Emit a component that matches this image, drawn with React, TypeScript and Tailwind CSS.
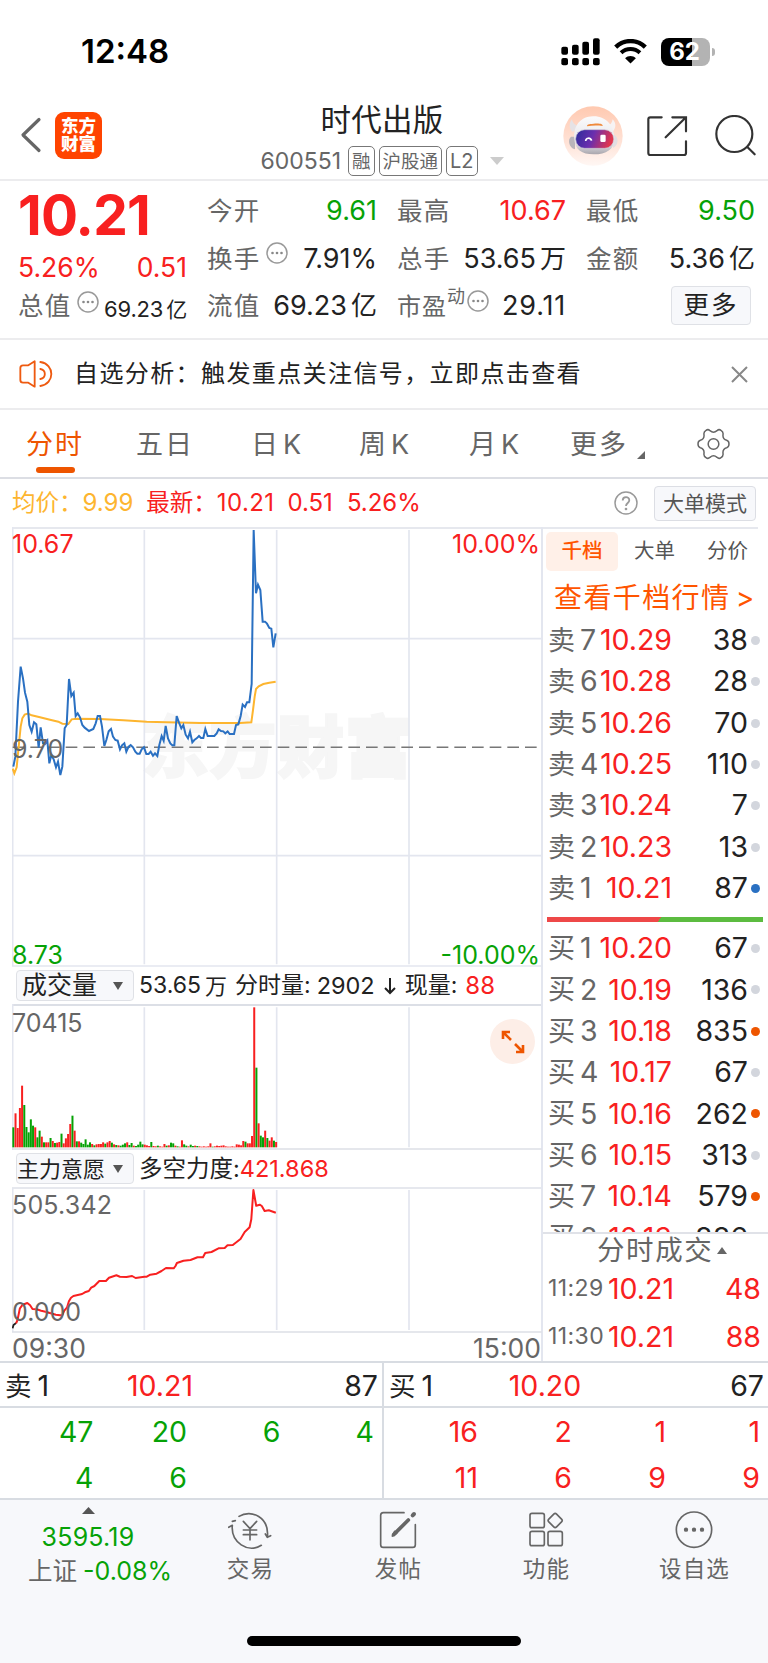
import React from "react";
import clsx from "clsx";

const sells = [
  ["7", "10.29", "38"],
  ["6", "10.28", "28"],
  ["5", "10.26", "70"],
  ["4", "10.25", "110"],
  ["3", "10.24", "7"],
  ["2", "10.23", "13"],
  ["1", "10.21", "87", "blue"],
];

const buys = [
  ["1", "10.20", "67"],
  ["2", "10.19", "136"],
  ["3", "10.18", "835", "orange"],
  ["4", "10.17", "67"],
  ["5", "10.16", "262", "orange"],
  ["6", "10.15", "313"],
  ["7", "10.14", "579", "orange"],
  ["8", "10.13", "886", "orange"],
];

// r = up, g = down
const volumes =
  "60g 102r 58r 118r 185r 127g 61g 45g 84g 65g 60r 30g 50g 32r 15g 15r 15r 28g 19r 13g 14r 16r 41g 12r 27r 40r 70r 95g 50r 18g 18r 14g 10g 24g 8g 15g 10r 6g 9r 10r 10r 15r 11g 15r 19r 14g 9r 7g 6r 5g 8g 12g 15r 7g 13g 5r 4g 8g 17g 9g 8r 6r 4r 16g 4r 3r 5g 3r 2r 10r 5g 6r 14g 12g 5r 3g 2r 21r 9g 5g 3r 8g 4g 5r 4g 3r 2r 3r 2r 3r 12r 2g 3r 5r 4r 5r 6r 3r 2r 2r 3r 2r 9r 8r 6r 19r 17g 12r 12r 34r 420r 239g 72r 35g 30g 50r 28g 20r 30r 20g 16r".split(" ");

const pricePoints =
  "40,860 46,830 54,665 62,560 69,595 75,638 82,665 88,735 95,755 102,727 109,733 116,803 122,742 129,790 135,792 142,782 148,850 154,825 161,838 168,862 174,845 181,885 187,860 194,745 200,735 207,597 214,648 221,638 227,708 233,700 240,712 247,735 254,743 267,753 280,747 287,730 293,708 300,708 306,740 313,798 319,780 326,754 333,747 339,770 346,780 353,782 360,808 366,796 373,790 379,815 386,800 392,795 399,802 406,815 412,821 419,821 425,808 432,802 439,822 446,822 452,815 459,827 465,820 472,828 478,795 485,768 491,782 497,738 504,775 511,790 517,796 523,796 530,708 537,728 544,745 550,735 557,764 564,775 570,755 577,787 583,780 590,775 597,768 603,774 610,774 616,747 623,768 643,768 650,760 656,748 663,753 670,754 676,760 683,754 689,762 702,762 708,735 715,733 722,708 728,674 735,681 741,667 748,667 755,612 761,150 768,340 774,314 781,330 788,425 795,425 801,431 808,444 814,446 820,502 827,460";

const avgPoints =
  "38,866 43,880 50,862 57,790 62,740 67,715 74,704 84,701 95,706 120,712 150,719 175,725 187,731 205,732 215,718 230,716 300,717 370,721 440,725 500,727 600,729 720,729 754,727 759,690 764,650 768,627 776,619 790,612 808,608 827,605";

const powerPoints =
  "16.1,163.3 17.5,160 19.9,148.3 22.7,144.7 27.3,143 30.1,145.3 32.5,149 36.7,149.3 41.2,150.7 45.4,151.7 50.7,153.3 55.9,154.7 60.1,155.3 62.2,155.3 64.3,150.7 67.1,147.3 68.9,141.3 71,137.7 73.4,136 82.1,134 84.9,132.3 88.8,131 91.2,127.7 94.4,126 99.3,121 105.9,121 109,117.7 116.4,115.3 119.9,116.7 126.5,117 132.1,116 135.6,118 144.4,116.7 146.8,116.7 150.3,114.7 156.6,113.7 161.5,111 166,108 173.7,108.3 175.5,106 176.9,103 183.5,100.7 190.5,100 197.5,97.3 203,97.3 205.2,93 211.5,92 218.5,88.3 224.7,88 227.5,85.3 232.8,85 240.5,79 244.7,72 249.6,67.3 251.3,59.3 253.4,30 256.2,45.7 259.7,44.7 261.8,46 264.6,51 268.8,50.3 275.8,52.7";

const StatusBar = () => (
  <div className="flex h-[103px] items-center justify-between pl-[81px] pr-[52px]">
    <span className="text-[33px] font-semibold leading-none text-black">12:48</span>
    <div className="flex items-center">
      <svg width="39" height="28" viewBox="0 0 117 84">
        <rect x="1" y="26" width="20" height="24" rx="6" />
        <rect x="33" y="20" width="20" height="30" rx="6" />
        <rect x="64" y="11" width="20" height="39" rx="6" />
        <rect x="96" y="1" width="20" height="49" rx="6" />
        <rect x="1" y="60" width="20" height="22" rx="6" />
        <rect x="33" y="60" width="20" height="22" rx="6" />
        <rect x="64" y="60" width="20" height="22" rx="6" />
        <rect x="96" y="60" width="20" height="22" rx="6" />
      </svg>
      <svg className="ml-[14px]" width="33" height="25" viewBox="0 0 98 74" fill="none">
        <path d="M5 24C30 0 68 0 93 24" stroke="#000" strokeWidth="13" />
        <path d="M21 41C37 26 61 26 77 41" stroke="#000" strokeWidth="12" />
        <path d="M33 57C42 48 56 48 65 57L49 73Z" fill="#000" />
      </svg>
      <div className="ml-[14px] flex h-7 w-[49px] items-center justify-center overflow-hidden rounded-[8px] bg-gradient-to-r from-black from-63% to-[#b3b3b3] to-63% pr-[2px] text-[24px] font-bold leading-none text-white">
        62
      </div>
      <div className="ml-[2px] mr-[1px] h-2 w-[3px] rounded-r-full bg-[#b3b3b3]" />
    </div>
  </div>
);

const Robot = () => (
  <svg width="60" height="60" viewBox="0 0 180 180">
    <defs>
      <linearGradient id="halo" x1="0" y1="0" x2="0" y2="1">
        <stop offset="0" stopColor="#ffc9b0" />
        <stop offset="0.6" stopColor="#ffe2d6" />
        <stop offset="1" stopColor="#fff7f4" />
      </linearGradient>
      <linearGradient id="shell" x1="0" y1="0" x2="0" y2="1">
        <stop offset="0" stopColor="#fbfbfc" />
        <stop offset="0.7" stopColor="#e6e5e9" />
        <stop offset="1" stopColor="#a9a6ad" />
      </linearGradient>
      <linearGradient id="visor" x1="0" y1="0" x2="1" y2="0.2">
        <stop offset="0" stopColor="#2c2b9a" />
        <stop offset="0.5" stopColor="#6a2fae" />
        <stop offset="1" stopColor="#e0354f" />
      </linearGradient>
    </defs>
    <circle cx="90" cy="90" r="89" fill="url(#halo)" />
    <path d="M27 40C18 52 17 66 29 78L48 62C36 58 28 50 27 40Z" fill="#e6e2e5" />
    <path d="M149 40C160 52 160 66 148 78L130 62C142 58 148 50 149 40Z" fill="#f7f3f4" />
    <path d="M24 92C14 100 16 124 36 130V92Z" fill="#b9b5ba" />
    <path d="M156 88C168 98 166 118 150 126V88Z" fill="#e2dee2" />
    <path d="M34 100C30 60 52 32 90 31C130 30 154 60 154 98C154 130 130 145 92 145C56 145 37 132 34 100Z" fill="url(#shell)" />
    <path d="M72 61C72 55 76 54 92 53C112 52 119 54 119 60C104 58 88 58 72 61Z" fill="#ef8a3c" />
    <rect x="38" y="71" width="114" height="56" rx="27" fill="url(#visor)" stroke="#cfc8d8" strokeWidth="2" />
    <path d="M68 105C69 94 82 94 86 104" fill="none" stroke="#fff" strokeWidth="5" />
    <rect x="112" y="86" width="16" height="22" rx="4" fill="#fff" />
  </svg>
);

const Badge = ({ children }) => (
  <span className="flex h-[30px] items-center whitespace-nowrap rounded-[5px] border border-[#777] px-[3px] text-[18.500px] leading-none text-[#666]">
    {children}
  </span>
);

const Header = () => (
  <div className="flex h-[78px] border-b-2 border-[#ececee]">
    <div className="flex w-[258px] items-center pb-[12px] pl-5">
      <svg width="22" height="36" viewBox="0 0 22 36" fill="none">
        <path d="M19 2.500L3 18L19 33.500" stroke="#666" strokeWidth="3.200" strokeLinecap="round" strokeLinejoin="round" />
      </svg>
      <div className="ml-[13px] flex h-[47px] w-[47px] flex-col items-center justify-center rounded-[9px] bg-[#ff4400] text-[17.500px] font-black leading-[18px] text-white">
        <span>东方</span>
        <span>财富</span>
      </div>
    </div>
    <div className="flex w-[248px] flex-col items-center">
      <div className="h-[33px] text-[30.500px] leading-[33px] tracking-[0.3px] text-[#222]">时代出版</div>
      <div className="mt-[10px] flex items-center gap-[4px]">
        <span className="mr-[3px] text-[23px] leading-none text-[#666]">600551</span>
        <Badge>融</Badge>
        <Badge>沪股通</Badge>
        <Badge>
          <span className="text-[20px]">L2</span>
        </Badge>
        <svg className="ml-[8px]" width="14" height="8" viewBox="0 0 14 8">
          <path d="M0 0H14L7 8Z" fill="#ccc" />
        </svg>
      </div>
    </div>
    <div className="flex flex-1 items-start pl-[57px] pt-[3px]">
      <Robot />
      <svg className="ml-[24px] mt-[10px]" width="41" height="41" viewBox="0 0 123 123" fill="none" stroke="#333" strokeWidth="6.500" strokeLinecap="round">
        <path d="M44 4H10Q4 4 4 10V111Q4 117 10 117H111Q117 117 117 111V76" />
        <path d="M76 4H117V46M117 4L56 64" />
      </svg>
      <svg className="ml-[27px] mt-[9px]" width="42" height="42" viewBox="0 0 126 126" fill="none" stroke="#333" strokeWidth="6.500" strokeLinecap="round">
        <circle cx="58" cy="57" r="54" />
        <path d="M97 96L119 118" />
      </svg>
    </div>
  </div>
);

const Dots = ({ className }: { className?: string }) => (
  <svg className={className} width="22" height="22" viewBox="0 0 22 22" fill="none">
    <circle cx="11" cy="11" r="10" stroke="#999" strokeWidth="1.500" />
    <circle cx="6.500" cy="11" r="1.300" fill="#888" />
    <circle cx="11" cy="11" r="1.300" fill="#888" />
    <circle cx="15.500" cy="11" r="1.300" fill="#888" />
  </svg>
);

const Stat = ({ label, value, color = "text-[#222]" }) => (
  <div className="flex h-[47.500px] items-center justify-between">
    <span className="flex text-[25.500px] tracking-[1.3px] text-[#666]">{label}</span>
    <span className={clsx("text-[27px]", color)}>{value}</span>
  </div>
);

const Stats = () => (
  <div className="flex h-[159px] gap-[20px] border-b-2 border-[#ececee] pl-[18px] pt-[6px] leading-none">
    <div className="w-[169px] text-[#f82020]">
      <div className="-mt-[1px] flex h-[58px] items-center text-[55px] font-bold tracking-[-0.8px]">10.21</div>
      <div className="mt-[1px] flex h-[44px] items-center justify-between text-[26.500px]">
        <span>5.26%</span>
        <span>0.51</span>
      </div>
      <div className="flex h-[34px] items-center">
        <span className="text-[25.500px] tracking-[1.3px] text-[#666]">总值</span>
        <Dots className="mb-2 ml-[5px]" />
        <span className="ml-auto whitespace-nowrap pt-[5px] text-[22px] tracking-[-0.2px] text-[#222]">
          69.23<span className="ml-[3px] text-[21px]">亿</span>
        </span>
      </div>
    </div>
    <div className="w-[170px]">
      <Stat label="今开" value="9.61" color="text-[#06a206]" />
      <Stat label={<>换手<Dots className="-mt-1 ml-[5px]" /></>} value="7.91%" />
      <Stat label="流值" value={<>69.23<span className="ml-1 text-[26px]">亿</span></>} />
    </div>
    <div className="w-[169px]">
      <Stat label="最高" value="10.67" color="text-[#f82020]" />
      <Stat label="总手" value={<>53.65<span className="ml-1 text-[26px]">万</span></>} />
      <Stat
        label={
          <>
            <span className="pt-[2px] text-[24px] tracking-[1px]">市盈</span>
            <span className="-mt-[5px] text-[18px] tracking-normal">动</span>
            <Dots className="-mt-[3px] ml-[2px]" />
          </>
        }
        value={<span className="tracking-[0.8px]">29.11</span>}
      />
    </div>
    <div className="w-[169px]">
      <Stat label="最低" value="9.50" color="text-[#06a206]" />
      <Stat label="金额" value={<>5.36<span className="ml-1 text-[26px]">亿</span></>} />
      <div className="flex h-[46px] items-center justify-end pr-[4px]">
        <span className="flex h-[39px] w-[80px] items-center justify-center rounded-[4px] border-[1.500px] border-[#dfe1e6] bg-[#f7f8fb] text-[25.500px] tracking-[2px] text-[#222]">更多</span>
      </div>
    </div>
  </div>
);

const Notice = () => (
  <div className="flex h-[70px] items-center border-b-2 border-[#ececee] pl-[19px] pr-[20px]">
    <svg width="34" height="28" viewBox="0 0 102 84" fill="none" stroke="#ee5a10" strokeWidth="5.500" strokeLinejoin="round" strokeLinecap="round">
      <path d="M47 4V80L28 68H12Q4 68 4 60V24Q4 16 12 16H28Z" />
      <path d="M64 6C108 12 108 72 64 78M64 27C82 30 82 54 64 57" />
    </svg>
    <span className="ml-[21px] text-[24px] tracking-[1.4px] leading-none text-[#222]">自选分析：触发重点关注信号，立即点击查看</span>
    <svg className="ml-auto" width="17" height="17" viewBox="0 0 17 17" stroke="#888" strokeWidth="2">
      <path d="M1 1L16 16M16 1L1 16" />
    </svg>
  </div>
);

const Tabs = () => (
  <div className="flex h-[69px] border-b-2 border-[#dcdee4] pt-[21px] text-[27px] leading-none tracking-[2px] text-[#666]">
    <div className="flex w-[110px] flex-col items-center text-[#ee5500]">
      <span>分时</span>
      <div className="mt-[9px] h-[6px] w-[39px] rounded-full bg-[#ee5500]" />
    </div>
    <div className="w-[110px] text-center">五日</div>
    <div className="w-[112px] text-center tracking-normal">
      日<span className="ml-[5px]">K</span>
    </div>
    <div className="w-[104px] text-center tracking-normal">
      周<span className="ml-[5px]">K</span>
    </div>
    <div className="w-[116px] text-center tracking-normal">
      月<span className="ml-[5px]">K</span>
    </div>
    <div className="flex w-[110px] pl-[18px]">
      <span>更多</span>
      <svg className="ml-[9px] mt-[20px]" width="8" height="8" viewBox="0 0 8 8">
        <path d="M8 0V8H0Z" fill="#666" />
      </svg>
    </div>
    <svg className="ml-[35px] -mt-[3px]" width="33" height="32" viewBox="0 0 99 96" fill="none" stroke="#666" strokeWidth="4.500" strokeLinejoin="round">
      <path d="M27 7C32 3 35 4 39 8C46 14 53 14 60 8C64 4 67 3 72 7C79 11 79 15 78 20C77 30 81 35 89 37C95 39 96 43 96 48C96 53 95 57 89 59C81 61 77 66 78 76C79 81 79 85 72 89C67 93 64 92 60 88C53 82 46 82 39 88C35 92 32 93 27 89C20 85 20 81 21 76C22 66 18 61 10 59C4 57 3 53 3 48C3 43 4 39 10 37C18 35 22 30 21 20C20 15 20 11 27 7Z" />
      <circle cx="49.500" cy="48" r="16" />
    </svg>
  </div>
);

const Legend = () => (
  <div className="flex h-[48px] items-center px-[12px] text-[24px] leading-none text-[#f82020]">
    <span className="text-[23.500px] text-[#fdb52f]">均价：</span>
    <span className="text-[#fdb52f]">9.99</span>
    <span className="ml-[13px] text-[23.500px]">最新：</span>
    <span className="tracking-[0.4px]">10.21</span>
    <span className="ml-[13px]">0.51</span>
    <span className="ml-[14px]">5.26%</span>
    <svg className="ml-auto" width="24" height="24" viewBox="0 0 24 24" fill="none" stroke="#999" strokeWidth="1.500">
      <circle cx="12" cy="12" r="11" />
      <path d="M8.700 9.500C8.700 5 15.300 5 15.300 9.300C15.300 12 12 12 12 15" strokeWidth="1.800" />
      <circle cx="12" cy="18" r="0.600" />
    </svg>
    <span className="ml-[16px] flex h-[35px] w-[102px] items-center justify-center rounded-[4px] border border-[#dcdee4] bg-[#f7f8fb] text-[21px] text-[#555]">大单模式</span>
  </div>
);

const PriceChart = () => (
  <div className="relative h-[440px] border-t-2 border-[#e6e8ee] text-[25px] leading-none">
    <svg className="absolute -top-[2px] left-0" width="530" height="440" viewBox="36 141 1590 1320" fill="none">
      <text x="424" y="876" fontSize="202" fontWeight="900" fill="#f6f6f6" stroke="#f6f6f6" strokeWidth="6" textLength="812">东方财富</text>
      <path d="M38 141V1458M36 476H1625M36 1127H1625" stroke="#e3e6ef" strokeWidth="5" />
      <path d="M433 150V1453M830 150V1453M1227 150V1453" stroke="#e3e6ef" strokeWidth="5" />
      <path d="M38 802H1625" stroke="#777" strokeWidth="4.500" strokeDasharray="35 18" />
      <path d="M36 1458H1625" stroke="#e3e6ef" strokeWidth="4" />
      <polyline points={avgPoints} stroke="#fdb52f" strokeWidth="6" />
      <polyline points={pricePoints} stroke="#2a70c2" strokeWidth="6" />
    </svg>
    <span className="absolute left-0 top-[3px] text-[#f82020]">10.67</span>
    <span className="absolute right-[1px] top-[3px] text-[#f82020]">10.00%</span>
    <span className="absolute left-0 top-[208px] text-[#666]">9.70</span>
    <span className="absolute bottom-[-1px] left-0 text-[#06a206]">8.73</span>
    <span className="absolute bottom-[-1px] right-[1px] text-[#06a206]">-10.00%</span>
  </div>
);

const Picker = ({ children, className }) => (
  <span className={clsx("flex h-[31px] w-[118px] items-center justify-between rounded-[4px] border border-[#dfe1e6] bg-[#f7f8fb] pr-[10px]", className)}>
    {children}
    <svg width="10" height="8" viewBox="0 0 10 8">
      <path d="M0 0H10L5 8Z" fill="#555" />
    </svg>
  </span>
);

const VolumeChart = () => (
  <>
    <div className="flex h-[37px] items-center whitespace-nowrap pl-[4px] text-[23px] leading-none text-[#222]">
      <Picker className="pl-[5px] text-[25px]">成交量</Picker>
      <span className="ml-[5px]">53.65</span>
      <span className="ml-[4px] text-[22px]">万</span>
      <span className="ml-[8px]">分时量:</span>
      <span className="ml-[6px] text-[23.500px]">2902</span>
      <svg className="mx-[6px]" width="18" height="18" viewBox="0 0 18 18" fill="none" stroke="#222" strokeWidth="2">
        <path d="M9 1V16M4 11L9 16L14 11" />
      </svg>
      <span>现量:</span>
      <span className="ml-[8px] text-[24px] text-[#f82020]">88</span>
    </div>
    <div className="relative h-[146px] border-t-2 border-[#dcdfe6] text-[25px] leading-none">
      <svg className="absolute -top-[2px] left-0" width="530" height="146" viewBox="36 162 1590 438">
        <path d="M38 162V600M433 172V592M830 172V592M1227 172V592" stroke="#e3e6ef" strokeWidth="5" />
        <path d="M36 597H1625" stroke="#dcdfe6" strokeWidth="5" />
        {volumes.map((v, i) => {
          const h = parseInt(v);
          return <rect key={i} x={37 + i * 6.57} y={592 - h} width="6" height={h} fill={v.endsWith("r") ? "#f82020" : "#06a206"} />;
        })}
      </svg>
      <span className="absolute left-0 top-[5px] text-[#666]">70415</span>
      <span className="absolute right-[6px] top-[13px] flex h-[45px] w-[45px] items-center justify-center rounded-full bg-[#fdeee7]">
        <svg width="24" height="24" viewBox="0 0 24 24" fill="none" stroke="#ee5500" strokeWidth="2.600">
          <path d="M2 9V2H9M2 2L10 10M22 15V22H15M22 22L14 14" />
        </svg>
      </span>
    </div>
  </>
);

const PowerChart = () => (
  <>
    <div className="flex h-[37px] items-center pl-[4px] text-[23px] leading-none text-[#222]">
      <Picker className="text-[22px]">主力意愿</Picker>
      <span className="ml-[5px] text-[23.500px]">多空力度:</span>
      <span className="text-[23.500px] text-[#f82020]">421.868</span>
    </div>
    <div className="relative h-[145px] border-t-2 border-[#e6e8ee] text-[25px] leading-none text-[#666]">
      <svg className="absolute -top-[2px] left-0" width="530" height="146" viewBox="12 27 530 146" fill="none">
        <path d="M12.700 28V172M144.300 30V170M276.700 30V170M409 30V170" stroke="#e3e6ef" strokeWidth="1.700" />
        <path d="M12 172H541.700" stroke="#dcdfe6" strokeWidth="1.700" />
        <path d="M12.600 168.300L13.500 165L16.100 163" stroke="#222" strokeWidth="1.800" />
        <polyline points={powerPoints} stroke="#f82020" strokeWidth="2" strokeLinejoin="round" />
      </svg>
      <span className="absolute left-0 top-[4px] tracking-[0.2px]">505.342</span>
      <span className="absolute bottom-[7px] left-0">0.000</span>
    </div>
    <div className="flex h-[30px] items-center justify-between pt-[2px] text-[26.500px] leading-none text-[#666]">
      <span>09:30</span>
      <span>15:00</span>
    </div>
  </>
);

const Quote = ({ side, row }) => (
  <div className="flex h-[41.330px] items-center text-[28.500px] leading-none">
    <span className="flex w-[50px] items-center whitespace-nowrap text-[#666]">
      <span className="mr-[5px] text-[27px]">{side}</span>
      {row[0]}
    </span>
    <span className="w-[74px] text-right text-[#f82020]">{row[1]}</span>
    <span className="ml-auto text-[#222]">{row[2]}</span>
    <span
      className={clsx(
        "ml-[3px] mr-[8px] h-[9px] w-[9px] rounded-full",
        row[3] === "blue" ? "bg-[#2a70c2]" : row[3] === "orange" ? "bg-[#ee5500]" : "bg-[#d3d6dd]"
      )}
    />
  </div>
);

const OrderBook = () => (
  <div className="flex w-[227px] flex-col border-l-2 border-[#e3e6ef]">
    <div className="mr-[10px] border-t-2 border-[#e6e8ee]" />
    <div className="mt-[3px] flex h-[39px] items-center pl-[3px] text-[20.500px] leading-none text-[#555]">
      <span className="flex h-[39px] w-[72px] items-center justify-center rounded-[5px] bg-[#fff0e8] font-medium text-[#ff5500]">千档</span>
      <span className="w-[73px] text-center">大单</span>
      <span className="w-[73px] text-center">分价</span>
    </div>
    <div className="mt-[11px] h-[37px] whitespace-nowrap pl-[11px] text-[28px] leading-[32px] tracking-[1.4px] text-[#ff5500]">
      查看千档行情 <span className="-ml-[4px]">&gt;</span>
    </div>
    <div className="pl-[5px] pt-[1px]">
      {sells.map((r) => (
        <Quote key={r[0]} side="卖" row={r} />
      ))}
    </div>
    <div className="ml-[4px] mr-[5px] mt-[8px] h-[5px] bg-linear-[125deg] from-[#ee4848] from-52% to-[#5cbc40] to-52%" />
    <div className="mt-[6px] h-[308px] overflow-hidden border-b-2 border-[#e0e2e8] pl-[5px]">
      {buys.map((r) => (
        <Quote key={r[0]} side="买" row={r} />
      ))}
    </div>
    <div className="flex h-[31px] items-center pl-[54px] pt-[3px] text-[27.500px] leading-none tracking-[1.6px] text-[#666]">
      分时成交
      <svg className="ml-[4px]" width="10" height="7" viewBox="0 0 10 7">
        <path d="M0 7H10L5 0Z" fill="#666" />
      </svg>
    </div>
    {["48", "88"].map((v, i) => (
      <div key={v} className="flex h-[48.500px] items-center pl-[5px] pr-[7px] text-[28.500px] leading-none text-[#f82020]">
        <span className="w-[60px] whitespace-nowrap text-[23px] tracking-[0.4px] text-[#666]">{i ? "11:30" : "11:29"}</span>
        <span>10.21</span>
        <span className="ml-auto">{v}</span>
      </div>
    ))}
  </div>
);

const Level = ({ side, price, count, orders, color, className }) => (
  <div className={clsx("text-[28.500px] leading-none", className)}>
    <div className="relative flex h-[45px] items-center justify-between border-b-2 border-[#d8dce2] pl-[5px] pr-[4px] pt-[3px] text-[#222]">
      <span className="flex items-center gap-[6px]">
        <span className="text-[26.500px]">{side}</span>1
      </span>
      <span className="absolute inset-x-0 pr-[62px] text-center text-[#f82020]">{price}</span>
      <span>{count}</span>
    </div>
    <div className={clsx("grid grid-cols-4 pr-[8px]", color)}>
      {orders.map((n, i) => (
        <span key={i} className="flex h-[46px] items-center justify-end pt-[3px]">{n}</span>
      ))}
    </div>
  </div>
);

const Levels = () => (
  <div className="flex h-[139px] border-b-2 border-t-2 border-[#d8dce2]">
    <Level className="w-[382px]" side="卖" price="10.21" count="87" orders={[47, 20, 6, 4, 4, 6]} color="text-[#06a206]" />
    <div className="w-[2px] bg-[#d8dce2]" />
    <Level className="w-[384px]" side="买" price="10.20" count="67" orders={[16, 2, 1, 1, 11, 6, 9, 9]} color="text-[#f82020]" />
  </div>
);

const NavItem = ({ label, children }) => (
  <div className="flex w-[148px] flex-col items-center pt-[8px]">
    <svg width="44" height="44" viewBox="0 0 132 132" fill="none" stroke="#666" strokeWidth="5" strokeLinecap="round" strokeLinejoin="round">
      {children}
    </svg>
    <span className="mt-[6px] pl-[1px] text-[22.500px] leading-none tracking-[1.2px] text-[#666]">{label}</span>
  </div>
);

const Navbar = () => (
  <div className="flex h-[164px] flex-col bg-[#f7f8fb]">
    <div className="flex h-[136px]">
      <div className="flex w-[176px] flex-col items-center pt-[7px] leading-none text-[#06a206]">
        <svg width="13" height="7" viewBox="0 0 13 7">
          <path d="M0 7H13L6.500 0Z" fill="#555" />
        </svg>
        <span className="mt-[11px] text-[25px] tracking-[0.2px]">3595.19</span>
        <span className="mt-[9px] whitespace-nowrap pl-[24px] text-[25px]">
          <span className="mr-[6px] text-[24.500px] text-[#666]">上证</span>-0.08%
        </span>
      </div>
      <NavItem label="交易">
        <path d="M33 19C70 -4 125 22 118 82L128 77M118 82L112 72" transform="translate(0 6)" />
        <path d="M100 112C60 136 8 104 13 52L2 58M13 40L22 38" />
        <path d="M46 40L66 62L86 40M66 62V96M46 66H86M46 80H86" />
      </NavItem>
      <NavItem label="发帖">
        <path d="M84 14H22Q14 14 14 22V110Q14 118 22 118H110Q118 118 118 110V50" />
        <path d="M53 80L97 36" strokeWidth="11" />
        <path d="M110 22L114 18" strokeWidth="12" />
        <path d="M49 84L56 70L62 76Z" fill="#666" />
      </NavItem>
      <NavItem label="功能">
        <rect x="18" y="16" width="43" height="43" rx="6" />
        <rect x="18" y="70" width="43" height="43" rx="6" />
        <rect x="72" y="70" width="43" height="43" rx="6" />
        <rect x="77" y="21" width="33" height="33" rx="6" transform="rotate(45 93.500 37.500)" />
      </NavItem>
      <NavItem label="设自选">
        <circle cx="66" cy="65" r="53" />
        <circle cx="42" cy="65" r="4" fill="#666" />
        <circle cx="66" cy="65" r="4" fill="#666" />
        <circle cx="90" cy="65" r="4" fill="#666" />
      </NavItem>
    </div>
    <div className="mx-auto h-[10px] w-[274px] rounded-full bg-black" />
  </div>
);

const App = () => {
  return (
    <div className="h-[1663px] w-[768px] overflow-hidden bg-white font-['Inter','Noto_Sans_CJK_SC',sans-serif]">
      <StatusBar />
      <Header />
      <Stats />
      <Notice />
      <Tabs />
      <Legend />
      <div className="flex h-[834px]">
        <div className="ml-[12px] w-[529px]">
          <PriceChart />
          <VolumeChart />
          <PowerChart />
        </div>
        <OrderBook />
      </div>
      <Levels />
      <Navbar />
    </div>
  );
};

export default App;
